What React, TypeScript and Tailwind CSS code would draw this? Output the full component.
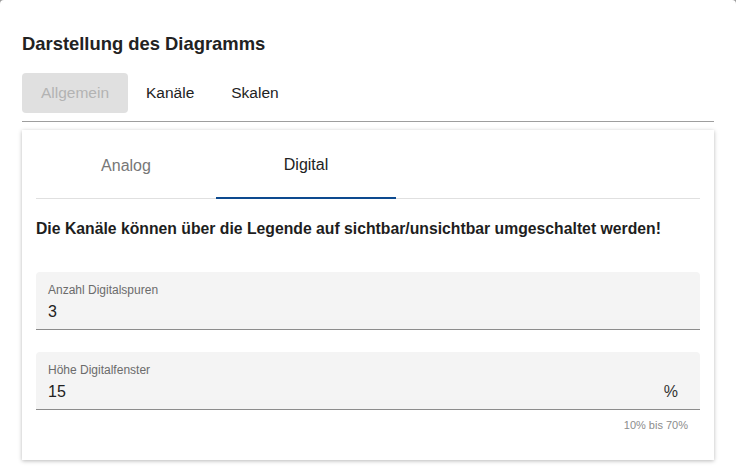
import { useState } from "react";

const font = { fontFamily: '"Liberation Sans", Arial, sans-serif' };

function TextField(props: { label: string; value: string; unit?: string; helper?: string }) {
    return (
        <div className="flex flex-col">
            <div className="flex h-[58px] flex-col rounded-t-[4px] border-b border-[#8c8c8c] bg-[#f4f4f4] px-3 pt-[11px]">
                <span className="text-[12px] leading-[14px] text-[#6b6b6b]">{props.label}</span>
                <div className="mt-[5px] flex items-center justify-between pr-[10px]">
                    <span className="text-[16px] leading-[20px] text-[#222]">{props.value}</span>
                    {props.unit && <span className="text-[16px] leading-[20px] text-[#333]">{props.unit}</span>}
                </div>
            </div>
            {props.helper && (
                <div className="pr-[12px] pt-[9px] text-right text-[11px] leading-[13px] text-[#8c8c8c]">{props.helper}</div>
            )}
        </div>
    );
}

export default function App() {
    const [tab, setTab] = useState("Digital");

    return (
        <div className="h-[471px] w-[736px] bg-[#9a9a9a]" style={font}>
            <div className="h-full w-full rounded-t-[4px] bg-white px-[22px] pt-[34px]">
                <h2 className="text-[18.4px] font-bold leading-[20px] text-[#222]">Darstellung des Diagramms</h2>

                <div className="mt-[19px] flex items-center border-b border-[#9e9e9e] pb-[8px]">
                    <button className="h-[40px] w-[106px] rounded-[4px] bg-[#e0e0e0] text-[15.5px] text-[#b3b3b3]">Allgemein</button>
                    <button className="ml-[12px] h-[40px] px-[6px] text-[15.5px] text-[#222]">Kanäle</button>
                    <button className="ml-[25px] h-[40px] px-[6px] text-[15.5px] text-[#222]">Skalen</button>
                </div>

                <div className="mt-[8px] h-[330px] bg-white px-[14px] shadow-[0_1px_4px_rgba(0,0,0,0.28)]">
                    <div className="flex border-b border-[#e0e0e0]">
                        {["Analog", "Digital"].map((t) => (
                            <button
                                key={t}
                                onClick={() => setTab(t)}
                                className={
                                    tab === t
                                        ? "mb-[-1px] h-[69px] w-[180px] border-b-2 border-[#0d4a8f] pt-[2px] text-[16px] text-[#222]"
                                        : "mb-[-1px] h-[69px] w-[180px] pt-[2px] text-[16px] text-[#777]"
                                }
                            >
                                {t}
                            </button>
                        ))}
                    </div>

                    <p className="mt-[21px] text-[15.75px] font-bold leading-[18px] text-[#1e1e1e]">
                        Die Kanäle können über die Legende auf sichtbar/unsichtbar umgeschaltet werden!
                    </p>

                    <div className="mt-[34px] flex flex-col gap-[22px]">
                        <TextField label="Anzahl Digitalspuren" value="3" />
                        <TextField label="Höhe Digitalfenster" value="15" unit="%" helper="10% bis 70%" />
                    </div>
                </div>
            </div>
        </div>
    );
}
